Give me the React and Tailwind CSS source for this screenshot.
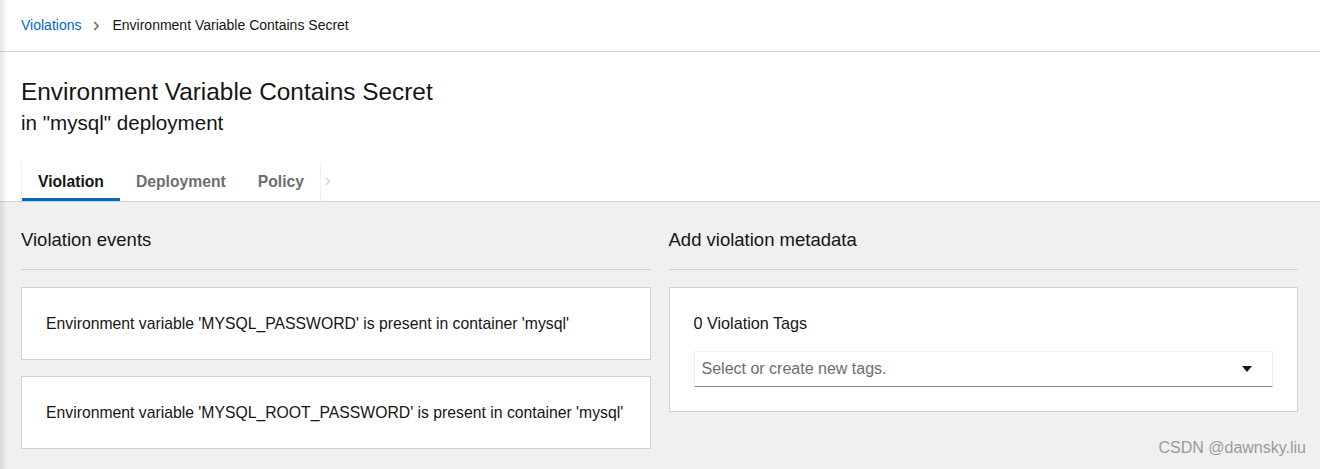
import React from "react";

const font = { fontFamily: '"Liberation Sans", Arial, sans-serif' };

function Chevron({ className }) {
  return (
    <svg className={className} viewBox="0 0 320 512" fill="currentColor">
      <path d="M285.5 273L91.1 467.3c-9.4 9.4-24.6 9.4-33.9 0l-22.7-22.7c-9.4-9.4-9.4-24.5 0-33.9L188.5 256 34.5 101.3c-9.3-9.4-9.3-24.5 0-33.9l22.7-22.7c9.4-9.4 24.6-9.4 33.9 0L285.5 239c9.4 9.4 9.4 24.6 0 34z" />
    </svg>
  );
}

const events = [
  "Environment variable 'MYSQL_PASSWORD' is present in container 'mysql'",
  "Environment variable 'MYSQL_ROOT_PASSWORD' is present in container 'mysql'",
];

export default function App() {
  return (
    <div className="w-[1320px] h-[469px] overflow-hidden bg-[#f0f0f0] text-[#151515] relative" style={font}>
      {/* sidebar shadow */}
      <div className="absolute left-0 top-0 bottom-0 w-[7px] bg-gradient-to-r from-black/10 to-transparent" />

      {/* breadcrumb */}
      <div className="bg-white h-[52px] border-b border-[#d2d2d2] px-[21px] flex items-center text-[14px]">
        <span className="text-[#0066cc]">Violations</span>
        <Chevron className="w-[7px] h-[10px] text-[#6a6e73] ml-[12px] mr-[12px]" />
        <span>Environment Variable Contains Secret</span>
      </div>

      {/* header + tabs */}
      <div className="bg-white border-b border-[#d2d2d2]">
        <div className="px-[21px] pt-[25px] pb-[25px]">
          <h1 className="text-[24.4px] leading-[30px]">Environment Variable Contains Secret</h1>
          <p className="text-[20.6px] leading-[28px] mt-[2px]">in "mysql" deployment</p>
        </div>
        <div className="px-[21px] flex items-stretch h-[39px]">
          <div className="flex border-l border-r border-[#f0f0f0]">
            <div className="px-4 flex items-center font-semibold text-[15.7px] border-b-[3px] border-[#0066cc] pt-[3px]">Violation</div>
            <div className="px-4 flex items-center font-semibold text-[15.7px] text-[#6a6e73]">Deployment</div>
            <div className="px-4 flex items-center font-semibold text-[15.7px] text-[#6a6e73]">Policy</div>
          </div>
          <div className="flex items-center pl-[4px]">
            <Chevron className="w-[6px] h-[9px] text-[#d2d2d2]" />
          </div>
        </div>
      </div>

      {/* body */}
      <div className="px-[21px] grid grid-cols-2 gap-[18px] pr-[22px]">
        <div>
          <h2 className="text-[18.5px] h-[68px] pt-[9px] flex items-center border-b border-[#d2d2d2]">Violation events</h2>
          <div className="flex flex-col gap-[16px] mt-[17px]">
            {events.map((e, i) => (
              <div key={i} className="bg-white border border-[#d2d2d2] h-[73px] px-6 flex items-center text-[15.75px]">
                {e}
              </div>
            ))}
          </div>
        </div>
        <div>
          <h2 className="text-[18.5px] h-[68px] pt-[9px] flex items-center border-b border-[#d2d2d2]">Add violation metadata</h2>
          <div className="bg-white border border-[#d2d2d2] mt-[17px] px-6 pt-[25px] pb-[24px]">
            <div className="text-[16.2px] leading-[20px]">0 Violation Tags</div>
            <div className="mt-[18px] h-[36px] border border-[#f0f0f0] border-b-[#8a8d90] flex items-center justify-between pl-[7px] pr-5 text-[16px] text-[#6a6e73]">
              <span>Select or create new tags.</span>
              <svg className="w-[10px] h-[6px] text-[#151515]" viewBox="0 0 10 6" fill="currentColor">
                <path d="M0 0h10L5 6z" />
              </svg>
            </div>
          </div>
        </div>
      </div>

      <div className="absolute right-[14px] bottom-[9px] text-[16px] text-[#9a9a9a]">CSDN @dawnsky.liu</div>
    </div>
  );
}
